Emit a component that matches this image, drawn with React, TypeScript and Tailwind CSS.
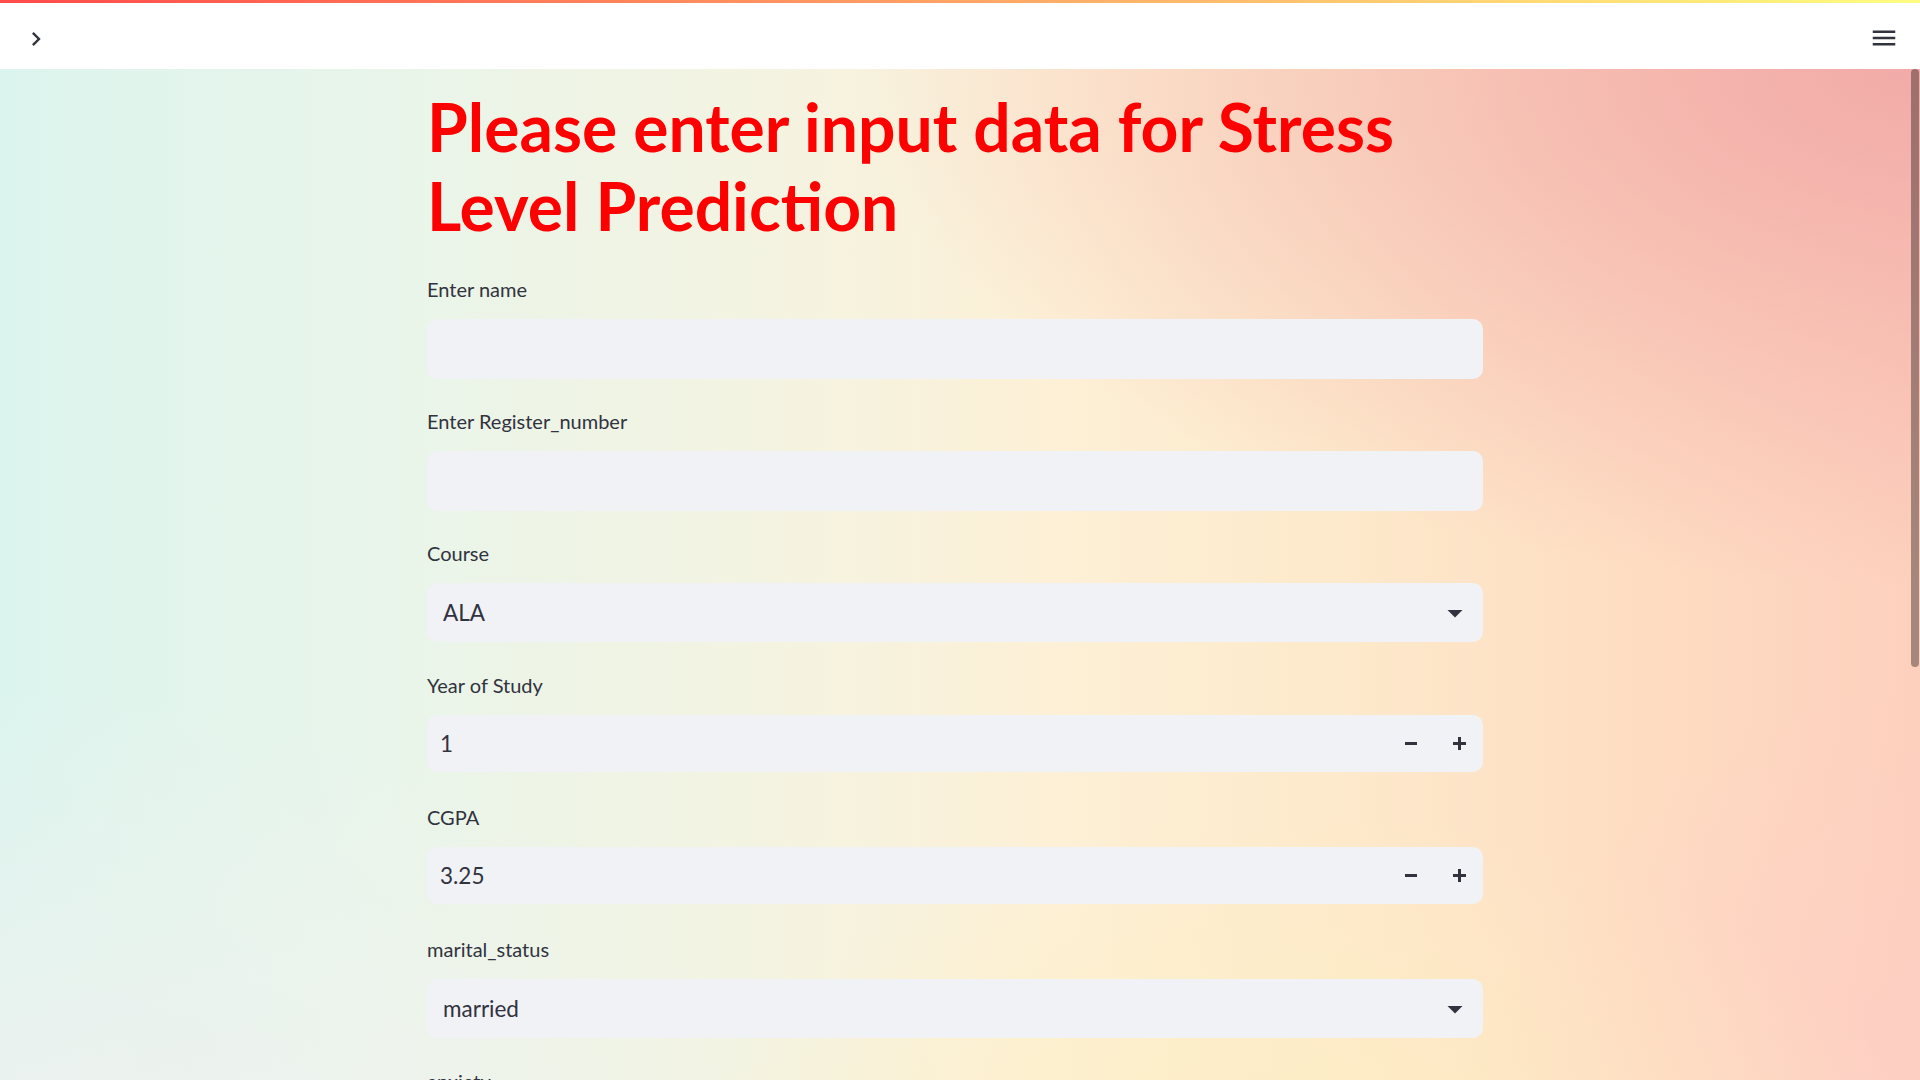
import { ReactNode } from "react";

type Field =
    | { kind: "text"; label: string }
    | { kind: "select"; label: string; value: string }
    | { kind: "number"; label: string; value: string };

const FIELDS: Field[] = [
    { kind: "text", label: "Enter name" },
    { kind: "text", label: "Enter Register_number" },
    { kind: "select", label: "Course", value: "ALA" },
    { kind: "number", label: "Year of Study", value: "1" },
    { kind: "number", label: "CGPA", value: "3.25" },
    { kind: "select", label: "marital_status", value: "married" },
    { kind: "select", label: "anxiety", value: "yes" },
    { kind: "select", label: "depression", value: "yes" },
];

function Label({ children }: { children: ReactNode }) {
    return <div className="h-[30px] mb-[15px] text-[20px] leading-[30px] text-[#31333f] whitespace-nowrap">{children}</div>;
}

function Caret() {
    return (
        <svg width="36" height="36" viewBox="0 0 24 24" fill="#31333f">
            <path d="M7 10l5 5 5-5z" />
        </svg>
    );
}

function Widget({ field }: { field: Field }) {
    return (
        <div className="h-[105px] flex flex-col">
            <Label>{field.label}</Label>
            {field.kind === "text" && <div className="h-[60px] rounded-[10px] bg-[#f0f2f6]" />}
            {field.kind === "select" && (
                <div className="h-[59px] rounded-[10px] bg-[#f0f2f6] flex items-center justify-between pl-[16px] pr-[10px]">
                    <span className="text-[22.5px] text-[#31333f]">{field.value}</span>
                    <Caret />
                </div>
            )}
            {field.kind === "number" && (
                <div className="h-[57px] rounded-[10px] bg-[#f0f2f6] flex items-center">
                    <span className="flex-1 pl-[13px] text-[22.5px] text-[#31333f]">{field.value}</span>
                    <button className="w-[48px] h-full flex items-center justify-center">
                        <span className="block w-[12px] h-[3px] bg-[#31333f]" />
                    </button>
                    <button className="w-[48px] h-full flex items-center justify-center">
                        <svg width="13" height="13" viewBox="0 0 13 13" fill="#31333f">
                            <rect x="0" y="5" width="13" height="3" />
                            <rect x="5" y="0" width="3" height="13" />
                        </svg>
                    </button>
                </div>
            )}
        </div>
    );
}

export default function App() {
    return (
        <div className="h-screen overflow-hidden flex flex-col bg-white font-['Lato',sans-serif]">
            {/* header */}
            <header className="relative h-[69px] shrink-0 bg-white flex items-start justify-between">
                <div className="absolute top-0 left-0 right-0 h-[3px] bg-[linear-gradient(90deg,#ff4b4b,#fffd80)]" />
                <div className="pl-[22px] pt-[25px]">
                    <svg width="28" height="28" viewBox="0 0 24 24" fill="#31333f">
                        <path d="M10 6L8.59 7.41 13.17 12l-4.58 4.59L10 18l6-6z" />
                    </svg>
                </div>
                <div className="pr-[21px] pt-[23px]">
                    <svg width="30" height="30" viewBox="0 0 24 24" fill="#31333f">
                        <path d="M3 18h18v-2H3v2zm0-5h18v-2H3v2zm0-7v2h18V6H3z" />
                    </svg>
                </div>
            </header>

            <div className="flex-1 flex bg-[radial-gradient(ellipse_55%_42%_at_100%_0%,#f2aba8_0%,rgba(242,171,168,0)_100%),radial-gradient(ellipse_45%_50%_at_0%_100%,#f3f1f0_0%,rgba(243,241,240,0)_100%),radial-gradient(ellipse_35%_40%_at_68%_100%,#fdefc2_0%,rgba(253,239,194,0)_100%),radial-gradient(ellipse_25%_50%_at_100%_100%,#fdcdc6_0%,rgba(253,205,198,0)_100%),linear-gradient(90deg,#dcf4ee_0%,#e9f5ea_20%,#f5f3e0_42%,#fdf0d6_55%,#fde9cb_70%,#fedcc2_86%,#fdd0bd_100%)]">
                <main className="flex-1 pt-[18px]">
                    <div className="w-[1056px] mx-auto">
                        <h1 className="text-[66px] leading-[79px] font-bold text-[#ff0000] mb-[29px]">
                            Please enter input data for Stress Level Prediction
                        </h1>
                        <div className="flex flex-col gap-[27px]">
                            {FIELDS.map((f) => (
                                <Widget key={f.label} field={f} />
                            ))}
                        </div>
                    </div>
                </main>
                {/* scrollbar */}
                <div className="w-[10px] shrink-0">
                    <div className="ml-[1px] w-[8px] h-[598px] rounded-full bg-black/35" />
                </div>
            </div>
        </div>
    );
}
